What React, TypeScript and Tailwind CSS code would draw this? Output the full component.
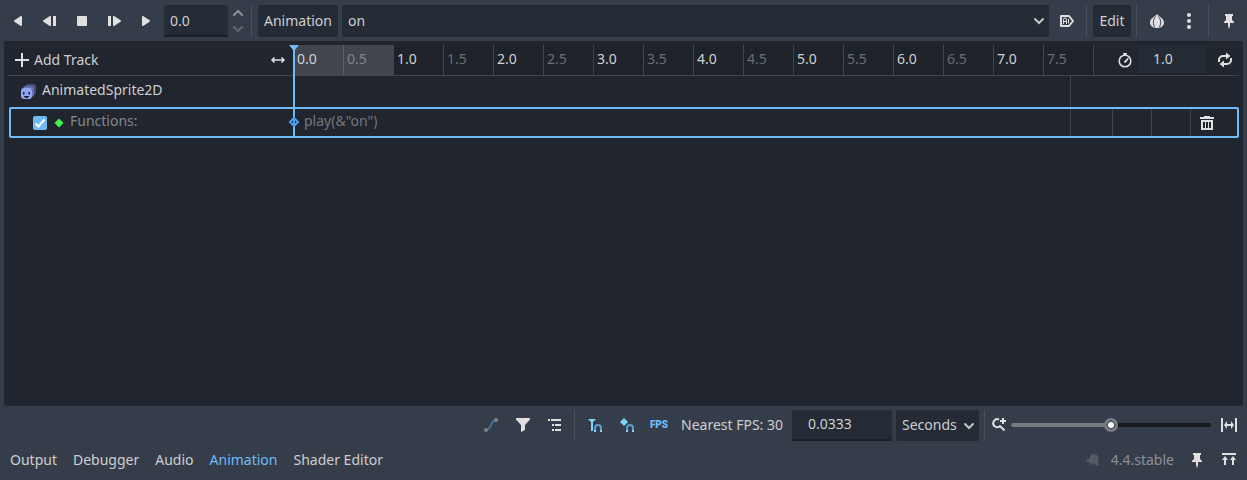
import { useState, type ReactNode } from "react";

const ticks = Array.from({ length: 16 }, (_, i) => (i / 2).toFixed(1));

function Icon({
  children,
  className = "text-[#e0e0e0]",
}: {
  children: ReactNode;
  className?: string;
}) {
  return (
    <svg
      viewBox="0 0 16 16"
      width="16"
      height="16"
      fill="currentColor"
      aria-hidden="true"
      className={`shrink-0 ${className}`}
    >
      {children}
    </svg>
  );
}

function IconButton({ label, children }: { label: string; children: ReactNode }) {
  return (
    <button
      aria-label={label}
      className="flex h-full w-7 shrink-0 items-center justify-center rounded-xs hover:bg-white/10"
    >
      {children}
    </button>
  );
}

function Separator() {
  return (
    <div className="flex w-1 shrink-0 self-stretch pl-px">
      <div className="w-px bg-[#4b515c]" />
    </div>
  );
}

function Chevron({ className }: { className: string }) {
  return (
    <Icon className={className}>
      <path d="M4 6l4 4 4-4" fill="none" stroke="currentColor" strokeWidth="2" strokeLinecap="round" />
    </Icon>
  );
}

function PinIcon() {
  return (
    <Icon>
      <path d="M4 1v2h1v4L3 9v1h4v3l1 3 1-3v-3h4V9l-2-2V3h1V1z" />
    </Icon>
  );
}

function Toolbar() {
  return (
    <div className="flex h-8 items-center gap-1">
      <IconButton label="Play backwards from end">
        <Icon>
          <path d="M12 12a1 1 0 0 1-1.555.832l-6-4a1 1 0 0 1 0-1.664l6-4A1 1 0 0 1 12 4z" />
        </Icon>
      </IconButton>
      <IconButton label="Play backwards">
        <Icon>
          <path d="M9 12a1 1 0 0 1-1.555.832l-6-4a1 1 0 0 1 0-1.664l6-4A1 1 0 0 1 9 4zM11 3h3v10h-3z" />
        </Icon>
      </IconButton>
      <IconButton label="Stop">
        <Icon>
          <rect x="3" y="3" width="10" height="10" rx="1" />
        </Icon>
      </IconButton>
      <IconButton label="Play from start">
        <Icon>
          <path d="M2 3h3v10H2zM7 12a1 1 0 0 0 1.555.832l6-4a1 1 0 0 0 0-1.664l-6-4A1 1 0 0 0 7 4z" />
        </Icon>
      </IconButton>
      <IconButton label="Play">
        <Icon>
          <path d="M4 12a1 1 0 0 0 1.555.832l6-4a1 1 0 0 0 0-1.664l-6-4A1 1 0 0 0 4 4z" />
        </Icon>
      </IconButton>

      <div className="flex h-full shrink-0">
        <input
          aria-label="Animation position"
          defaultValue="0.0"
          className="w-16 rounded-t-xs border-b-2 border-[#1b2027] bg-[#252b34] px-1.5 pt-0.5"
        />
        <div className="flex w-[18px] flex-col items-end justify-between">
          <button aria-label="Increase" className="rotate-180">
            <Chevron className="text-[#8f9298]" />
          </button>
          <button aria-label="Decrease">
            <Chevron className="text-[#62666f]" />
          </button>
        </div>
      </div>

      <Separator />
      <button className="h-full shrink-0 rounded-xs bg-[#252b34] px-1.5">Animation</button>
      <div className="relative h-full flex-1">
        <select
          aria-label="Current animation"
          className="h-full w-full appearance-none rounded-xs bg-[#252b34] px-1.5"
        >
          <option>on</option>
        </select>
        <div className="pointer-events-none absolute inset-y-0 right-0.5 flex items-center">
          <Chevron className="text-[#c4c5c8]" />
        </div>
      </div>
      <IconButton label="Autoplay on load">
        <Icon>
          <path
            d="M2 3h8l4 5-4 5H2z"
            fill="none"
            stroke="currentColor"
            strokeWidth="2"
            strokeLinejoin="round"
          />
          <path
            d="M4.500 11V6.500a1.500 1.500 0 0 1 3 0V11M4.500 8.500h3M9.500 6v4.500"
            fill="none"
            stroke="currentColor"
          />
        </Icon>
      </IconButton>
      <Separator />
      <button className="h-full w-[38px] shrink-0 rounded-xs bg-[#252b34] text-center">Edit</button>
      <Separator />
      <IconButton label="Onion skinning">
        <Icon>
          <path d="M8 1C6.500 3.500 1 5 1 9.500 1 13 4 15 8 15s7-2 7-5.500C15 5 9.500 3.500 8 1z" />
          <path
            d="M6.500 3.500C4 6 3.500 11.500 6 14.500M9.500 3.500C12 6 12.500 11.500 10 14.500"
            fill="none"
            stroke="#363d4a"
            strokeWidth="1"
          />
        </Icon>
      </IconButton>
      <IconButton label="Onion skinning options">
        <Icon>
          <circle cx="8" cy="2" r="2" />
          <circle cx="8" cy="8" r="2" />
          <circle cx="8" cy="14" r="2" />
        </Icon>
      </IconButton>
      <Separator />
      <IconButton label="Pin animation player">
        <PinIcon />
      </IconButton>
    </div>
  );
}

function Timeline() {
  const [enabled, setEnabled] = useState(true);

  return (
    <div className="flex-1 rounded-xs bg-[#21252e] p-1">
      <div className="relative">
        <div className="flex h-[31px] border-b border-[#41454c]">
          <div className="flex w-[285px] shrink-0 items-center justify-between pr-[7px] pl-1.5">
            <button className="flex items-center gap-1">
              <Icon>
                <path d="M7 1h2v6h6v2H9v6H7V9H1V7h6z" />
              </Icon>
              Add Track
            </button>
            <Icon>
              <path
                d="M4.500 5.500L2 8l2.500 2.500M11.500 5.500L14 8l-2.500 2.500M2 8h12"
                fill="none"
                stroke="currentColor"
                strokeWidth="1.500"
              />
            </Icon>
          </div>
          <div className="flex flex-1 overflow-hidden bg-[#1e2229]">
            {ticks.map((tick, i) => (
              <div
                key={tick}
                className={`w-[50px] shrink-0 border-l pt-1 pl-[3px] ${
                  i < 2 ? "border-[#5d6066] bg-[#42454c]" : "border-[#41454c]"
                } ${i % 2 ? (i < 2 ? "text-[#808286]" : "text-[#6b6d71]") : "text-[#d0d1d3]"}`}
              >
                {tick}
              </div>
            ))}
            <div className="flex-1 border-l border-[#41454c] bg-[#21252e]" />
          </div>
          <div className="flex shrink-0 items-center gap-1">
            <Icon>
              <circle cx="8" cy="9" r="5.800" fill="none" stroke="currentColor" strokeWidth="1.600" />
              <path d="M6 1h4v1.500H9V4H7V2.500H6zM10.800 5.700l1 1L9 10.500a1.200 1.200 0 0 1-2-1z" />
            </Icon>
            <input
              aria-label="Animation length"
              defaultValue="1.0"
              className="h-[30px] w-[70px] self-start rounded-t-xs border-b-2 border-[#1d2128] bg-[#252b34] pb-0.5 pl-4"
            />
            <IconButton label="Animation looping">
              <Icon>
                <path
                  d="M2 10V8a4 4 0 0 1 4-4h4M14 6v2a4 4 0 0 1-4 4H6"
                  fill="none"
                  stroke="currentColor"
                  strokeWidth="2"
                />
                <path d="M9 .500v7L13.500 4zM7 8.500v7L2.500 12z" />
              </Icon>
            </IconButton>
          </div>
        </div>

        <div className="flex h-[31px]">
          <div className="flex flex-1 items-center gap-1.5 pb-1 pl-3">
            <Icon className="mt-1">
              <rect x="5" y="0" width="11" height="11" rx="3" fill="#474f7c" />
              <rect x="3" y="2" width="11" height="11" rx="3" fill="#6672b3" />
              <rect x="1" y="4" width="11" height="11" rx="3" fill="#8da5f3" />
              <path d="M3 8h1.500v2.500H3zM8.500 8H10v2.500H8.500zM4 12h5v1H8v1H5v-1H4z" fill="#21252e" />
            </Icon>
            AnimatedSprite2D
          </div>
          <div className="w-[169px] border-l border-[#41454c]" />
        </div>

        <div className="ml-px flex h-[31px] rounded-xs border-2 border-[#70bafa]">
          <div className="flex w-[282px] shrink-0 items-center pl-[22px]">
            <label className="relative flex">
              <input
                type="checkbox"
                aria-label="Track enabled"
                checked={enabled}
                onChange={(e) => setEnabled(e.target.checked)}
                className="size-3.5 appearance-none rounded-xs bg-[#3a404b] checked:bg-[#70bafa]"
              />
              {enabled && (
                <svg
                  viewBox="0 0 14 14"
                  className="pointer-events-none absolute inset-0 size-3.5"
                  fill="none"
                  stroke="#fff"
                  strokeWidth="2"
                  aria-hidden="true"
                >
                  <path d="M2.500 7.500l3 3 6-7" />
                </svg>
              )}
            </label>
            <Icon className="ml-1 text-[#44f349]">
              <path d="M8 3.500L12.500 8 8 12.500 3.500 8z" />
            </Icon>
            <span className="ml-[3px] pb-1 text-[#84878c]">Functions:</span>
          </div>
          <div className="flex flex-1 items-center pb-1 pl-[11px] text-[#74777c]">play(&amp;"on")</div>
          <div className="flex shrink-0">
            <div className="w-[42px] border-l border-[#41454c]" />
            <div className="w-[39px] border-l border-[#41454c]" />
            <div className="w-[39px] border-l border-[#41454c]" />
            <div className="flex w-[47px] items-center border-l border-[#41454c] pl-0.5">
              <IconButton label="Remove track">
                <Icon>
                  <path
                    d="M5 1h6v1h4v2H1V2h4zM2 5h12v10H2zm2 2v6h2V7zm3 0v6h2V7zm3 0v6h2V7z"
                    fillRule="evenodd"
                  />
                </Icon>
              </IconButton>
            </div>
          </div>
        </div>

        {/* playhead */}
        <svg
          width="12"
          height="92"
          viewBox="0 0 12 92"
          className="pointer-events-none absolute top-0 left-[280px]"
          aria-hidden="true"
        >
          <path d="M1 0h10L7 5v87H5V5z" fill="#70bafa" />
          <path d="M6 73l4 4-4 4-4-4z" fill="#21252e" stroke="#4aa0ee" strokeWidth="2" />
          <path d="M5 72h2v10H5z" fill="#4aa0ee" />
        </svg>
      </div>
    </div>
  );
}

function Footer() {
  const [zoom, setZoom] = useState(50);

  return (
    <div className="flex h-[30px] items-center justify-end gap-1">
      <IconButton label="Use bezier curves">
        <Icon>
          <path d="M3 13c6 0 4-10 10-10" fill="none" stroke="#44709c" strokeWidth="2" />
          <circle cx="3" cy="13" r="2" fill="#7d828b" />
          <circle cx="13" cy="3" r="2" fill="#7d828b" />
        </Icon>
      </IconButton>
      <IconButton label="Filter tracks">
        <Icon>
          <path d="M1 1h14v1.500L10 8v5l-4 2V8L1 2.500z" />
        </Icon>
      </IconButton>
      <IconButton label="Group tracks by node">
        <Icon>
          <path d="M1 2h2v2H1zM4 2h10v2H4zM5 7h2v2H5zM8 7h6v2H8zM5 12h2v2H5zM8 12h6v2H8z" />
        </Icon>
      </IconButton>
      <Separator />
      <IconButton label="Snap to timeline cursor">
        <Icon>
          <path d="M1 2h8L6 5v9H4V5z" fill="#80d4fa" />
          <path d="M8 13v-2a3 3 0 0 1 6 0v2" fill="none" stroke="#5ba0c8" strokeWidth="2" />
          <path d="M7 13h2v2H7zM13 13h2v2h-2z" fill="#80d4fa" />
        </Icon>
      </IconButton>
      <IconButton label="Snap to keys">
        <Icon>
          <path d="M5 1l4 4-4 4-4-4z" fill="#80d4fa" />
          <path d="M8 13v-2a3 3 0 0 1 6 0v2" fill="none" stroke="#5ba0c8" strokeWidth="2" />
          <path d="M7 13h2v2H7zM13 13h2v2h-2z" fill="#80d4fa" />
        </Icon>
      </IconButton>
      <button
        aria-label="Snap to FPS"
        className="h-full w-7 text-center font-['Roboto',sans-serif] text-[10px] font-black text-[#70bafa]"
      >
        FPS
      </button>
      <span className="w-[111px] shrink-0 pl-1">Nearest FPS: 30</span>
      <input
        aria-label="Snap step"
        defaultValue="0.0333"
        className="h-[31px] w-[100px] self-start rounded-t-xs border-b-2 border-[#1b2027] bg-[#252b34] pb-0.5 pl-4"
      />
      <div className="relative h-[31px] self-start">
        <select
          aria-label="Snap unit"
          className="h-full w-[83px] appearance-none rounded-xs bg-[#252b34] px-1.5 pb-0.5"
        >
          <option>Seconds</option>
          <option>FPS</option>
        </select>
        <div className="pointer-events-none absolute inset-y-0 right-0.5 flex items-center">
          <Chevron className="text-[#c4c5c8]" />
        </div>
      </div>
      <Separator />
      <Icon>
        <path
          d="M8 2.500A4 4 0 1 0 9.500 8.500M9 9l4.500 4.500M12 1v6M9 4h6"
          fill="none"
          stroke="currentColor"
          strokeWidth="2"
        />
      </Icon>
      <div className="relative flex w-[200px] items-center">
        <div className="absolute inset-x-0 h-1 overflow-hidden rounded-full bg-[#16191e]">
          <div className="h-full bg-[#777b82]" style={{ width: `${zoom}%` }} />
        </div>
        <input
          type="range"
          aria-label="Timeline zoom"
          value={zoom}
          onChange={(e) => setZoom(Number(e.target.value))}
          className="relative h-4 w-full appearance-none bg-transparent [&::-webkit-slider-thumb]:size-3.5 [&::-webkit-slider-thumb]:appearance-none [&::-webkit-slider-thumb]:rounded-full [&::-webkit-slider-thumb]:border-2 [&::-webkit-slider-thumb]:border-[#777b82] [&::-webkit-slider-thumb]:bg-white [&::-webkit-slider-thumb]:shadow-[inset_0_0_0_2px_#4d525b]"
        />
      </div>
      <IconButton label="Fit timeline">
        <Icon>
          <path d="M0 1h2v14H0zM14 1h2v14h-2zM6 4v3h4V4l3 4-3 4V9H6v3L3 8z" />
        </Icon>
      </IconButton>
    </div>
  );
}

function BottomTabs() {
  return (
    <div className="flex h-8 items-center justify-between">
      <nav className="flex gap-1">
        <button className="px-1.5">Output</button>
        <button className="px-1.5">Debugger</button>
        <button className="px-1.5">Audio</button>
        <button className="px-1.5 text-[#70bafa]">Animation</button>
        <button className="px-1.5">Shader Editor</button>
      </nav>
      <div className="flex h-full items-center gap-1">
        <Icon className="text-[#555b66]">
          <path d="M6 2.500l1.500-1 1 1C12 2 14 4 13.500 7l-.5 4 1 2-1 1-5-2.500c-.5 2-3 1.500-3-.5L1 9l.5-1.500L4 7z" />
        </Icon>
        <button className="pr-[5px] pl-1.5 text-[#8b8f96]">4.4.stable</button>
        <IconButton label="Pin bottom panel">
          <PinIcon />
        </IconButton>
        <IconButton label="Expand bottom panel">
          <Icon>
            <path d="M1 1h14v2H1zM4 4l3 4H5v5H3V8H1zM12 4l3 4h-2v5h-2V8H9z" />
          </Icon>
        </IconButton>
      </div>
    </div>
  );
}

export default function App() {
  return (
    <main className="flex min-h-screen flex-col gap-1 bg-[#363d4a] px-1 pt-[5px] pb-1 font-['Noto_Sans',sans-serif] text-sm text-[#cdced1]">
      <Toolbar />
      <Timeline />
      <Footer />
      <BottomTabs />
    </main>
  );
}
